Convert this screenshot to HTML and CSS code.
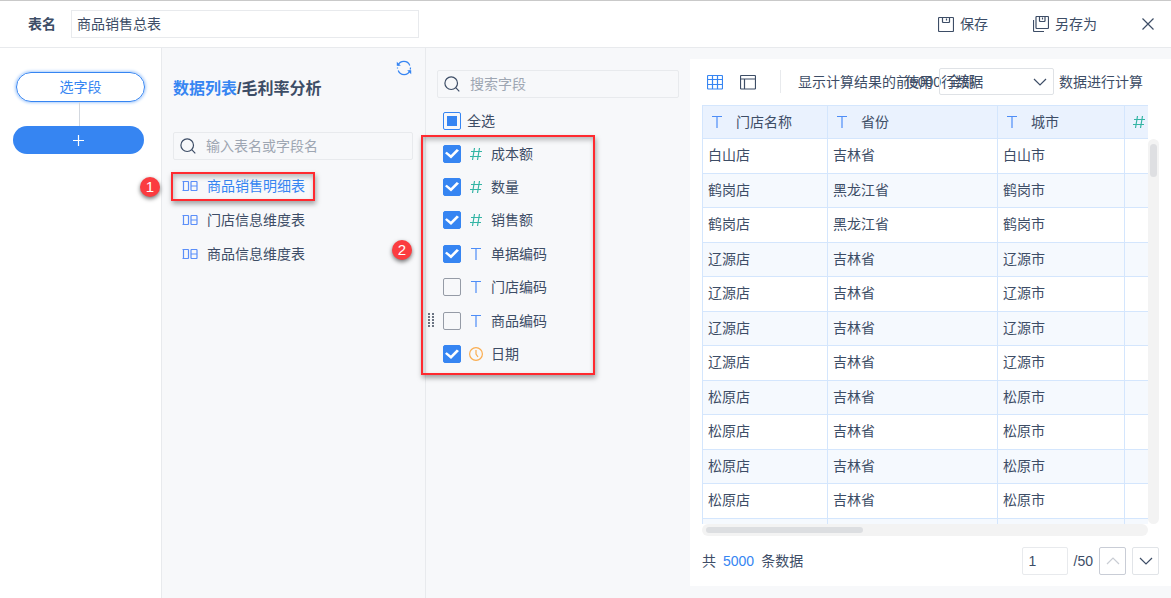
FILE: index.html
```html
<!DOCTYPE html>
<html lang="zh-CN">
<head>
<meta charset="utf-8">
<title>商品销售总表</title>
<link rel="stylesheet" href="styles.css">
</head>
<body>
<svg class="sprite" aria-hidden="true">
  <symbol id="i-text" viewBox="0 0 14 14"><path d="M2 1.500h10M7 1.500V13"/></symbol>
  <symbol id="i-num" viewBox="0 0 14 14"><path d="M5.500 1L3.500 13M10.500 1l-2 12M2 4.500h11M1 9.500h11"/></symbol>
  <symbol id="i-date" viewBox="0 0 14 14"><circle cx="7" cy="7" r="6.400"/><path d="M7 3v4l2 3"/></symbol>
  <symbol id="i-db" viewBox="0 0 16 10"><path d="M1.500 .5v9M.5 .5h5.500l.5.500v8l-.5.500H.5M9.500 .5h5l.5.500v8l-.5.500h-5l-.5-.500V1zM9 5h6"/></symbol>
  <symbol id="i-search" viewBox="0 0 16 16"><circle cx="7.200" cy="7.200" r="6.300"/><path d="M11.700 11.700L15.300 15.300"/></symbol>
  <symbol id="i-down" viewBox="0 0 14 8"><path d="M1 1l6 6 6-6"/></symbol>
  <symbol id="i-up" viewBox="0 0 14 8"><path d="M1 7l6-6 6 6"/></symbol>
</svg>

<header class="topbar">
  <label class="topbar-label" for="table-name">表名</label>
  <input class="name-input" id="table-name" type="text" value="商品销售总表">
  <div class="topbar-actions">
    <button class="action" type="button">
      <svg class="icon" width="16" height="16" viewBox="0 0 16 16"><path d="M1 1.500h14l.5.500v13l-.5.500H1l-.5-.500V2zM4.500 1.500V6l.5.500h6l.5-.500V1.500M8.500 2.500v2"/></svg>保存
    </button>
    <button class="action" type="button">
      <svg class="icon" width="16" height="16" viewBox="0 0 16 16"><path d="M3.500 .5H15l.5.500v11l-.5.500H3.500L3 12V1zM6.500 .5V5l.5.500h4.500l.5-.500V.5M9.500 1.500v2M.5 4v11l.5.500h10"/></svg>另存为
    </button>
    <button class="close" type="button" aria-label="关闭">
      <svg class="icon" width="12" height="12" viewBox="0 0 12 12"><path d="M.5 .5l11 11M11.500 .5l-11 11"/></svg>
    </button>
  </div>
</header>

<main class="workspace">
  <nav class="steps" aria-label="步骤">
    <button class="step-button" type="button">选字段</button>
    <span class="step-line"></span>
    <button class="step-add" type="button" aria-label="添加步骤">
      <svg class="icon" width="11" height="11" viewBox="0 0 11 11"><path d="M5.500 0v11M0 5.500h11"/></svg>
    </button>
  </nav>

  <section class="sources">
    <div class="sources-tools">
      <button class="refresh" type="button" aria-label="刷新">
        <svg class="icon" width="16" height="16" viewBox="0 0 16 16"><path d="M2 5.500A6.300 6.300 0 0 1 13.800 5.500M14.500 7.500a6.500 6.500 0 0 1-.3 2M14 10.500A6.300 6.300 0 0 1 2.200 10.500M1.500 8.500a6.500 6.500 0 0 1 0-1"/><path class="solid" d="M.8 1.800v4h4zM15.200 14.200v-4h-4z"/></svg>
      </button>
    </div>
    <h1 class="crumb"><a class="crumb-link" href="#list">数据列表</a>/毛利率分析</h1>
    <label class="search">
      <svg class="icon" width="16" height="16"><use href="#i-search"/></svg>
      <input class="search-input" type="text" placeholder="输入表名或字段名" aria-label="输入表名或字段名">
    </label>
    <ul class="source-list" id="list">
      <li class="source"><a class="source-link is-active" href="#t1"><svg class="icon db" width="16" height="10"><use href="#i-db"/></svg>商品销售明细表</a>
        <span class="marker marker-source"></span><span class="badge badge-source">1</span></li>
      <li class="source"><a class="source-link" href="#t2"><svg class="icon db" width="16" height="10"><use href="#i-db"/></svg>门店信息维度表</a></li>
      <li class="source"><a class="source-link" href="#t3"><svg class="icon db" width="16" height="10"><use href="#i-db"/></svg>商品信息维度表</a></li>
    </ul>
  </section>

  <section class="fields">
    <label class="search">
      <svg class="icon" width="16" height="16"><use href="#i-search"/></svg>
      <input class="search-input" type="text" placeholder="搜索字段" aria-label="搜索字段">
    </label>
    <label class="check-all"><input class="check is-partial" type="checkbox">全选</label>
    <ul class="field-list">
      <li class="field"><label class="field-label"><input class="check" type="checkbox" checked><svg class="icon num" width="14" height="14"><use href="#i-num"/></svg>成本额</label></li>
      <li class="field"><label class="field-label"><input class="check" type="checkbox" checked><svg class="icon num" width="14" height="14"><use href="#i-num"/></svg>数量</label></li>
      <li class="field"><label class="field-label"><input class="check" type="checkbox" checked><svg class="icon num" width="14" height="14"><use href="#i-num"/></svg>销售额</label></li>
      <li class="field"><label class="field-label"><input class="check" type="checkbox" checked><svg class="icon txt" width="14" height="14"><use href="#i-text"/></svg>单据编码</label></li>
      <li class="field"><label class="field-label"><input class="check" type="checkbox"><svg class="icon txt" width="14" height="14"><use href="#i-text"/></svg>门店编码</label></li>
      <li class="field"><span class="grip"></span><label class="field-label"><input class="check" type="checkbox"><svg class="icon txt" width="14" height="14"><use href="#i-text"/></svg>商品编码</label></li>
      <li class="field"><label class="field-label"><input class="check" type="checkbox" checked><svg class="icon date" width="14" height="14"><use href="#i-date"/></svg>日期</label></li>
      <li class="field-notes"><span class="marker marker-fields"></span><span class="badge badge-fields">2</span></li>
    </ul>
  </section>

  <section class="preview">
    <div class="preview-bar">
      <button class="view" type="button" aria-label="表格视图">
        <svg class="icon grid-icon" width="16" height="16" viewBox="0 0 16 16"><path d="M1 1.500h14l.5.500v12.500l-.5.500H1l-.5-.500V2zM.5 5.500h15M.5 10.500h15M5.500 1.500V15M10.500 1.500V15"/></svg>
      </button>
      <button class="view" type="button" aria-label="布局视图">
        <svg class="icon" width="16" height="16" viewBox="0 0 16 16"><path d="M1 1.500h14l.5.500v12.500l-.5.500H1l-.5-.500V2zM.5 5h15M4.500 5v10"/></svg>
      </button>
      <span class="bar-split"></span>
      <span class="limit-text">显示计算结果的前5000行数据</span>
      <label class="scope-label" for="scope">使用</label>
      <span class="scope">
        <select class="scope-select" id="scope"><option>全部</option></select>
        <svg class="icon scope-arrow" width="14" height="8"><use href="#i-down"/></svg>
      </span>
      <span class="scope-text">数据进行计算</span>
    </div>

    <div class="grid">
      <div class="grid-view">
        <table class="data">
          <colgroup><col class="c-store"><col class="c-prov"><col class="c-city"><col class="c-num"></colgroup>
          <thead><tr>
            <th><span class="head"><svg class="icon txt" width="14" height="14"><use href="#i-text"/></svg>门店名称</span></th>
            <th><span class="head"><svg class="icon txt" width="14" height="14"><use href="#i-text"/></svg>省份</span></th>
            <th><span class="head"><svg class="icon txt" width="14" height="14"><use href="#i-text"/></svg>城市</span></th>
            <th><span class="head"><svg class="icon num" width="14" height="14"><use href="#i-num"/></svg></span></th>
          </tr></thead>
          <tbody>
            <tr><td>白山店</td><td>吉林省</td><td>白山市</td><td></td></tr>
            <tr><td>鹤岗店</td><td>黑龙江省</td><td>鹤岗市</td><td></td></tr>
            <tr><td>鹤岗店</td><td>黑龙江省</td><td>鹤岗市</td><td></td></tr>
            <tr><td>辽源店</td><td>吉林省</td><td>辽源市</td><td></td></tr>
            <tr><td>辽源店</td><td>吉林省</td><td>辽源市</td><td></td></tr>
            <tr><td>辽源店</td><td>吉林省</td><td>辽源市</td><td></td></tr>
            <tr><td>辽源店</td><td>吉林省</td><td>辽源市</td><td></td></tr>
            <tr><td>松原店</td><td>吉林省</td><td>松原市</td><td></td></tr>
            <tr><td>松原店</td><td>吉林省</td><td>松原市</td><td></td></tr>
            <tr><td>松原店</td><td>吉林省</td><td>松原市</td><td></td></tr>
            <tr><td>松原店</td><td>吉林省</td><td>松原市</td><td></td></tr>
            <tr><td></td><td></td><td></td><td></td></tr>
          </tbody>
        </table>
      </div>
      <div class="bar-y"><span class="thumb-y"></span></div>
      <div class="bar-x"><span class="thumb-x"></span></div>
    </div>

    <footer class="pager">
      <span>共</span><span class="total">5000</span><span>条数据</span>
      <input class="page-input" type="text" value="1" aria-label="页码">
      <span class="page-total">/50</span>
      <button class="page-button is-off" type="button" aria-label="上一页" disabled><svg class="icon" width="14" height="8"><use href="#i-up"/></svg></button>
      <button class="page-button" type="button" aria-label="下一页"><svg class="icon" width="14" height="8"><use href="#i-down"/></svg></button>
    </footer>
  </section>
</main>
</body>
</html>
```

FILE: styles.css
```css
* { box-sizing: border-box; }

:root {
  --text: #3d4d66;
  --blue: #3685f2;
  --line: #e8eaed;
  --grid-line: #d4e6fd;
  --panel: #f7f8fa;
  --red: #ff2a30;
}

body {
  margin: 0;
  min-height: 100vh;
  display: flex;
  flex-direction: column;
  background: #fff;
  color: var(--text);
  font: 14px/20px "Liberation Sans", "Noto Sans CJK SC", sans-serif;
}

button, input, select {
  font: inherit;
  color: inherit;
  margin: 0;
}

button {
  padding: 0;
  border: 0;
  background: none;
  cursor: pointer;
}

a { color: inherit; text-decoration: none; }
ul { list-style: none; margin: 0; padding: 0; }

.sprite { position: absolute; width: 0; height: 0; }
.icon { flex: none; fill: none; stroke: currentColor; stroke-width: 1.2; }
.txt { color: #4d8df7; }
.num { color: #35b5a5; }
.date { color: #faad50; }
.db { color: #5b8ff9; }

/* Top bar */
.topbar {
  display: flex;
  align-items: center;
  height: 48px;
  padding: 0 17px 0 28px;
  border-top: 1px solid #c9c9c9;
  border-bottom: 1px solid var(--line);
}
.topbar-label { font-weight: 700; margin-right: 15px; }
.name-input {
  width: 348px;
  height: 28px;
  padding: 0 5px 2px;
  border: 1px solid var(--line);
  outline: 0;
}
.topbar-actions { display: flex; align-items: center; margin-left: auto; }
.action { display: flex; align-items: center; gap: 6px; margin-right: 45px; }
.close { display: flex; }

/* Columns */
.workspace {
  flex: 1;
  display: grid;
  grid-template-columns: 162px 264px 264px minmax(0, 1fr);
  background: var(--panel);
}

.steps {
  display: flex;
  flex-direction: column;
  align-items: center;
  padding: 24px 16px 0 13px;
  border-right: 1px solid var(--line);
  background: #fff;
}
.step-button {
  align-self: stretch;
  height: 30px;
  margin-left: 3px;
  border: 1px solid var(--blue);
  border-radius: 15px;
  box-shadow: 0 0 3px 1px #a9ccfb;
  color: var(--blue);
}
.step-line { width: 1px; height: 24px; background: #d3d8df; }
.step-add {
  display: flex;
  align-items: center;
  justify-content: center;
  align-self: stretch;
  height: 28px;
  margin-right: 1px;
  border-radius: 14px;
  background: var(--blue);
  color: #fff;
}

.search {
  display: flex;
  align-items: center;
  gap: 10px;
  height: 28px;
  padding: 0 6px;
  border: 1px solid var(--line);
  border-radius: 2px;
}
.search-input {
  flex: 1;
  min-width: 0;
  padding: 0;
  border: 0;
  outline: 0;
  background: none;
}
.search-input::placeholder { color: #9ea6b2; }

.sources { padding: 12px 12px 0 11px; border-right: 1px solid var(--line); }
.sources-tools { display: flex; justify-content: flex-end; padding-right: 1px; }
.refresh { display: flex; color: var(--blue); }
.solid { fill: currentColor; stroke: none; }
.crumb { margin: 0 0 30px; font-size: 16px; line-height: 26px; }
.crumb-link { color: var(--blue); }
.source-list { padding-top: 9px; }
.source { position: relative; }
.source-link {
  display: flex;
  align-items: center;
  gap: 9px;
  height: 34px;
  padding-left: 9px;
}
.source:nth-child(odd) + .source .source-link { height: 34px; }
.source-link.is-active { color: var(--blue); }

/* Call-outs drawn over the lists */
.marker {
  position: absolute;
  border: 2px solid var(--red);
  box-shadow: 1px 3px 5px rgba(0, 0, 0, .35), inset 1px 3px 5px rgba(0, 0, 0, .25);
  pointer-events: none;
}
.marker-source { left: -2px; top: 3px; width: 144px; height: 29px; }
.badge {
  position: absolute;
  width: 20px;
  height: 20px;
  border-radius: 50%;
  background: #fb3c40;
  box-shadow: 0 2px 4px rgba(0, 0, 0, .55);
  color: #fff;
  font-size: 15px;
  text-align: center;
}
.badge-source { left: -33px; top: 8px; }

/* Fields */
.fields { padding-top: 22px; }
.fields .search { margin: 0 11px; }
.check-all {
  display: flex;
  align-items: center;
  gap: 6px;
  height: 33px;
  margin-top: 6px;
  padding-left: 17px;
}
.check {
  appearance: none;
  flex: none;
  display: grid;
  place-items: center;
  width: 18px;
  height: 18px;
  border: 1px solid #959ba6;
  border-radius: 2px;
}
.check:checked { border-color: var(--blue); background: var(--blue); }
.check:checked::after {
  content: "";
  width: 14px;
  height: 10px;
  background: #fff;
  clip-path: polygon(0 47%, 12% 32%, 42% 66%, 84% 6%, 100% 20%, 43% 100%);
}
.check.is-partial { border-color: var(--blue); }
.check.is-partial::after {
  content: "";
  width: 10px;
  height: 10px;
  background: var(--blue);
}
.field-list { position: relative; }
.field { display: flex; align-items: center; height: 33px; padding-left: 17px; }
.field:nth-child(2n + 3) { height: 34px; }
.field-label { display: flex; align-items: center; gap: 8px; }
.grip {
  width: 6px;
  height: 15px;
  margin: 0 9px 0 -15px;
  background: radial-gradient(circle at 1px 1px, #6b7482 1px, transparent 1px) 0 0 / 4px 3px;
}
.marker-fields { left: -5px; top: -2px; width: 174px; height: 240px; }
.badge-fields { left: -34px; top: 103px; }

/* Preview */
.preview {
  display: flex;
  flex-direction: column;
  min-width: 0;
  margin: 11px 0 12px;
  padding: 9px 12px 11px;
  background: #fff;
}
.preview-bar {
  display: flex;
  align-items: center;
  height: 27px;
  padding-left: 5px;
  white-space: nowrap;
}
.view { display: flex; margin-right: 17px; }
.grid-icon { color: var(--blue); }
.bar-split { width: 1px; height: 23px; margin: 0 17px 0 7px; background: var(--line); }
.limit-text { width: 107px; }
.scope-label { margin-right: 6px; }
.scope { display: grid; align-items: center; }
.scope-select {
  grid-area: 1 / 1;
  appearance: none;
  width: 115px;
  height: 27px;
  padding: 0 7px 1px;
  border: 1px solid #dfe2e6;
  border-radius: 2px;
  background: none;
}
.scope-arrow { grid-area: 1 / 1; justify-self: end; margin-right: 7px; pointer-events: none; }
.scope-text { margin-left: 5px; }

.grid {
  flex: 1;
  display: grid;
  grid-template-columns: minmax(0, 1fr) 11px;
  grid-template-rows: minmax(0, 1fr) 12px;
  margin-top: 10px;
}
.grid-view { height: 419px; overflow: hidden; }
.data { width: 550px; table-layout: fixed; border-collapse: separate; border-spacing: 0; }
.c-store { width: 125px; }
.c-prov { width: 170px; }
.c-city { width: 127px; }
.data th, .data td {
  height: 35px;
  padding: 0 5px 2px;
  border-left: 1px solid var(--grid-line);
  border-bottom: 1px solid var(--grid-line);
  text-align: left;
  font-weight: 400;
}
.data th { height: 34px; padding: 0 7px; border-top: 1px solid var(--grid-line); background: #eaf2fe; }
.data tr:nth-child(even) td { height: 34px; background: #f5f9fe; }
.head { display: flex; align-items: center; gap: 12px; }
.bar-y { margin-top: 34px; padding: 5px 2px; border-radius: 6px; background: #f3f3f3; }
.thumb-y { display: block; height: 33px; border-radius: 4px; background: #dedfe2; }
.bar-x { padding: 3px 4px; border-radius: 6px; background: #f3f3f3; }
.thumb-x { display: block; width: 157px; height: 6px; border-radius: 3px; background: #dcdee1; }

.pager { display: flex; align-items: center; gap: 6px; margin-top: 11px; }
.total { padding: 0 1px; color: var(--blue); }
.page-input {
  width: 46px;
  height: 28px;
  margin-left: auto;
  padding: 0 6px;
  border: 1px solid var(--line);
  border-radius: 2px;
  outline: 0;
}
.page-button {
  display: flex;
  align-items: center;
  justify-content: center;
  width: 27px;
  height: 28px;
  border: 1px solid #e1e4e8;
  border-radius: 2px;
}
.page-button.is-off { border-color: #c9cdd6; color: #c9cdd4; }
```
